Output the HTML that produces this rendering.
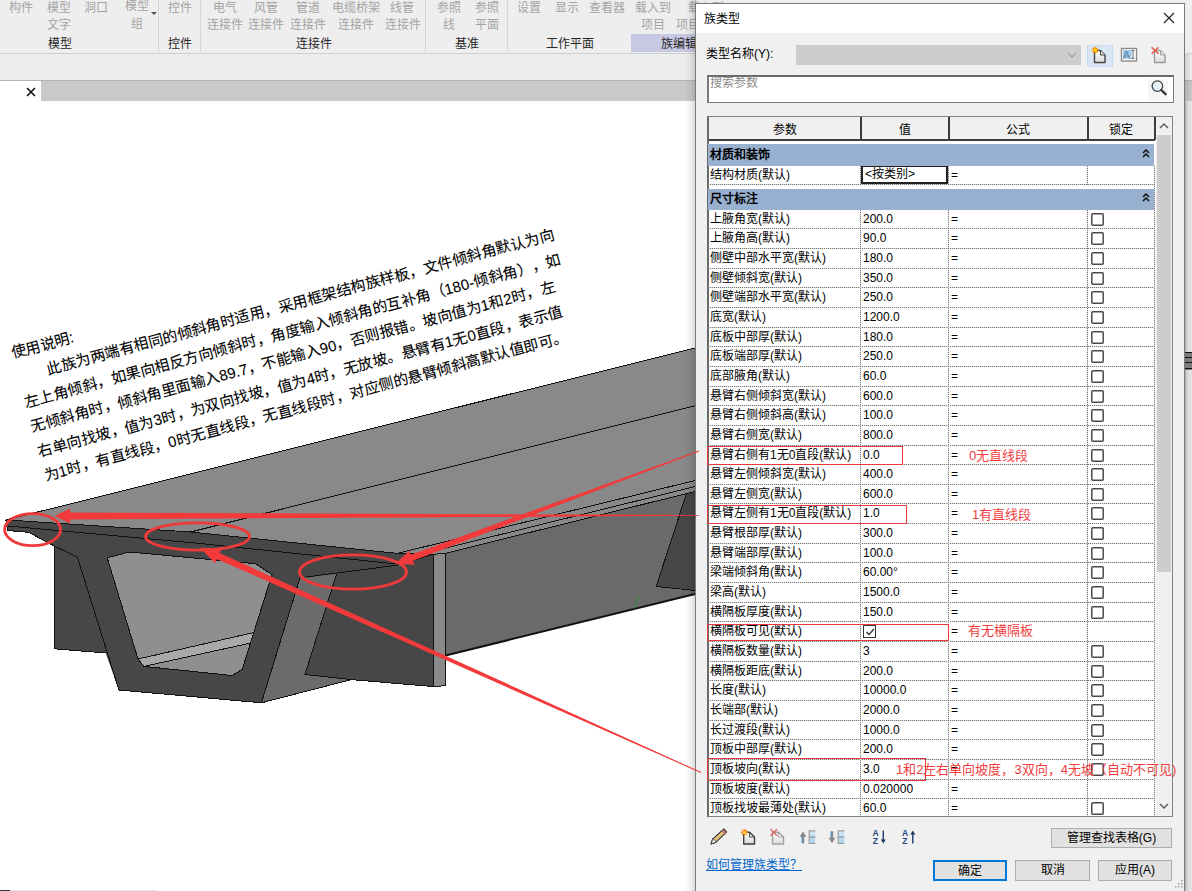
<!DOCTYPE html>
<html lang="zh-CN"><head><meta charset="utf-8">
<style>
*{box-sizing:border-box}
html,body{margin:0;padding:0}
body{width:1192px;height:891px;overflow:hidden;position:relative;background:#fff;font-family:"Liberation Sans",sans-serif;color:#000}
.a{position:absolute}
.rb{position:absolute;font-size:12px;color:#a4a4a4;white-space:nowrap;line-height:14px}
.rl{position:absolute;font-size:12px;color:#262626;white-space:nowrap;line-height:14px}
.sep{position:absolute;top:0;width:1px;height:52px;background:#d6d6d6}
.row{position:absolute;left:708px;width:446px;height:20px;font-size:12px;line-height:18px;white-space:nowrap}
.c1{position:absolute;left:2px;top:0}
.c2{position:absolute;left:155px;top:0}
.c3{position:absolute;left:243px;top:0}
.cb{position:absolute;left:383px;top:3px;width:13px;height:13px}
.dl{position:absolute;left:0;width:446px;height:1px;background-color:#dcdcdc;background-image:linear-gradient(to right,#7a7a7a 50%,transparent 50%);background-size:2px 1px}
.dv{position:absolute;width:1px;background-color:#dcdcdc;background-image:linear-gradient(to bottom,#7a7a7a 50%,transparent 50%);background-size:1px 2px}
.sec{position:absolute;left:708px;width:446px;background:#98b1d0;font-size:12px;font-weight:bold;line-height:20px}
.rt{position:absolute;color:#f23d3d;font-size:13px;white-space:nowrap;line-height:16px}
.rbx{position:absolute;border:1px solid #e8383c}
.btn{position:absolute;background:#e1e1e1;border:1px solid #adadad;font-size:12px;text-align:center;line-height:18px}
</style></head><body>

<div class="a" style="left:0;top:0;width:1192px;height:53px;background:#eeeeee"></div>
<div class="a" style="left:0;top:53px;width:1192px;height:1px;background:#cfcfcf"></div>
<div class="a" style="left:0;top:54px;width:1192px;height:26px;background:#ededed"></div>
<div class="rb" style="left:9px;top:1px">构件</div>
<div class="rb" style="left:47px;top:1px">模型</div>
<div class="rb" style="left:47px;top:18px">文字</div>
<div class="rb" style="left:84px;top:1px">洞口</div>
<div class="rb" style="left:125px;top:-1px">模型</div>
<div class="rb" style="left:131px;top:17px">组</div>
<div class="rb" style="left:168px;top:1px">控件</div>
<div class="rb" style="left:213px;top:1px">电气</div>
<div class="rb" style="left:207px;top:18px">连接件</div>
<div class="rb" style="left:254px;top:1px">风管</div>
<div class="rb" style="left:248px;top:18px">连接件</div>
<div class="rb" style="left:296px;top:1px">管道</div>
<div class="rb" style="left:290px;top:18px">连接件</div>
<div class="rb" style="left:332px;top:1px">电缆桥架</div>
<div class="rb" style="left:338px;top:18px">连接件</div>
<div class="rb" style="left:390px;top:1px">线管</div>
<div class="rb" style="left:385px;top:18px">连接件</div>
<div class="rb" style="left:437px;top:1px">参照</div>
<div class="rb" style="left:443px;top:18px">线</div>
<div class="rb" style="left:475px;top:1px">参照</div>
<div class="rb" style="left:475px;top:18px">平面</div>
<div class="rb" style="left:517px;top:1px">设置</div>
<div class="rb" style="left:555px;top:1px">显示</div>
<div class="rb" style="left:589px;top:1px">查看器</div>
<div class="rb" style="left:635px;top:1px">载入到</div>
<div class="rb" style="left:641px;top:18px">项目</div>
<div class="rb" style="left:688px;top:1px">载入到</div>
<div class="rb" style="left:676px;top:18px">项目</div>
<div class="sep" style="left:158px"></div>
<div class="sep" style="left:200px"></div>
<div class="sep" style="left:425px"></div>
<div class="sep" style="left:507px"></div>
<div class="a" style="left:631px;top:34px;width:70px;height:18px;background:#c6c8e4"></div>
<div class="rl" style="left:48px;top:37px">模型</div>
<div class="rl" style="left:168px;top:37px">控件</div>
<div class="rl" style="left:296px;top:37px">连接件</div>
<div class="rl" style="left:455px;top:37px">基准</div>
<div class="rl" style="left:546px;top:37px">工作平面</div>
<div class="rl" style="left:661px;top:37px">族编辑器</div>
<div class="a" style="left:151px;top:12px;width:0;height:0;border-left:3px solid transparent;border-right:3px solid transparent;border-top:3px solid #555"></div>
<div class="a" style="left:0;top:80px;width:1192px;height:1px;background:#b4b4b4"></div>
<div class="a" style="left:0;top:81px;width:1192px;height:20px;background:#c9c9c9"></div>
<div class="a" style="left:0;top:81px;width:41px;height:20px;background:#fff"></div>
<svg class="a" style="left:26px;top:87px" width="10" height="10"><path d="M1 1L9 9M9 1L1 9" stroke="#111" stroke-width="1.6"/></svg>
<svg class="a" style="left:0;top:0" width="1192" height="891" viewBox="0 0 1192 891">
<g stroke="none">
<polygon fill="#898989" points="5.9,519.9 695,348 695,491.5 445.5,553.3 433.5,554.3 397.4,553.4 190.6,532"/>
<polygon fill="#6a6a6a" points="445.5,553.3 695,491.5 695,593.4 445.5,655"/>
<polygon fill="#474747" points="686.5,493.5 695,491.5 695,590.5 656.2,586.5"/>
<polygon fill="#474747" points="5.9,519.9 190.6,532 397.4,553.4 433.5,554.3 433.5,686.6 351.4,679.6 261.4,702.8 118.9,690 105.7,653 54.3,648.8 54.3,546 28.6,532.3 7.6,530.6"/>
<polygon fill="#8f8f8f" points="107.2,557.8 129.2,552 255.4,563.7 272,574.5 242.2,669.4 232.1,675.5 143.9,666.4 138,659"/>
<polygon fill="#a9a9a9" points="138,659 253,632.7 251,643 143.9,666.4"/>
<polygon fill="#6b6b6b" points="299.8,578.5 336.8,573.5 304.9,674.5 351.4,679.6 261.4,702.8"/>
<polygon fill="#8a8a8a" points="433.5,554.3 445.5,553.3 445.5,685.6 433.5,686.6"/>
</g>
<g stroke="#111" stroke-width="1" fill="none" shape-rendering="crispEdges">
<polyline points="5.9,519.9 695,348"/>
<polyline points="190.6,532 695,405.7"/>
<polyline points="5.9,519.9 190.6,532 397.4,553.4 433.5,554.3 445.5,553.3"/>
<polyline points="397.4,553.4 695,480.5"/>
<polyline points="433.5,551 695,486.6"/>
<polyline points="445.5,553.3 695,491.5"/>
<polyline points="7.6,526 200,543.5 397,564"/>
<polyline points="5.9,519.9 7.6,530.6 28.6,532.3 54.3,546 77.4,557.2 118.9,690 261.4,702.8 351.4,679.6 433.5,686.6 445.5,685.6 445.5,553.3"/>
<polyline points="54.3,546 54.3,648.8 105.7,653"/>
<polyline points="107.2,557.8 129.2,552 255.4,563.7 272,574.5 242.2,669.4 232.1,675.5 143.9,666.4 138,659 107.2,557.8"/>
<polyline points="138,659 253,632.7"/>
<polyline points="143.9,666.4 251,643"/>
<polyline points="299.8,578.5 261.4,702.8"/>
<polyline points="306,577 395.8,565.4 433.5,554.3"/>
<polyline points="336.8,573.5 304.9,674.5 351.4,679.6"/>
<polyline points="433.5,554.3 433.5,686.6"/>
<polyline points="686.5,493.5 656.2,586.5 695,590.5"/>
</g>
<path d="M445.5 655.5L695 594" stroke="#111" stroke-width="2"/>
<path d="M634.5 608.5L638.5 595.5" stroke="#2e8b2e" stroke-width="1"/>
</svg>

<div class="a" style="left:8px;top:341px;transform-origin:0 0;transform:rotate(-15deg);font-size:15px;line-height:25.4px;color:#000;-webkit-text-stroke:0.08px #000;white-space:nowrap">
<div>使用说明:</div>
<div style="padding-left:30px">此族为两端有相同的倾斜角时适用，采用框架结构族样板，文件倾斜角默认为向</div>
<div>左上角倾斜，如果向相反方向倾斜时，角度输入倾斜角的互补角（180-倾斜角）<span style="margin-left:7px">，如</span></div>
<div>无倾斜角时，倾斜角里面输入89.7，不能输入90，否则报错。坡向值为1和2时，左</div>
<div>右单向找坡，值为3时，为双向找坡，值为4时，无放坡。悬臂有1无0直段，表示值</div>
<div>为1时，有直线段，0时无直线段，无直线段时，对应侧的悬臂倾斜高默认值即可。</div>
</div>

<div class="a" style="left:684px;top:0;width:12px;height:891px;background:linear-gradient(to right,rgba(0,0,0,0),rgba(0,0,0,0.05) 50%,rgba(0,0,0,0.16))"></div>
<div class="a" style="left:1185px;top:101px;width:7px;height:790px;background:linear-gradient(to right,#a8a8a8,#d8d8d8 30%,#e4e4e4)"></div>
<svg class="a" style="left:1185px;top:351px" width="7" height="20"><rect x="0" y="1" width="7" height="18" fill="#7a7a7a"/><path d="M0 1.5H7M0 6.5H7M0 11.5H7M0 17.5H7" stroke="#111" stroke-width="1"/></svg>
<div class="a" style="left:1185px;top:54px;width:7px;height:47px;background:linear-gradient(to right,rgba(0,0,0,0.12),rgba(0,0,0,0))"></div>
<div class="a" style="left:695px;top:3px;width:490px;height:900px;background:#f0f0f0;border:1px solid #7a7a7a"></div>
<div class="a" style="left:696px;top:4px;width:488px;height:29px;background:#fff"></div>
<div class="a" style="left:704px;top:12px;font-size:12px;line-height:14px;color:#000">族类型</div>
<svg class="a" style="left:1163px;top:12px" width="12" height="12"><path d="M1 1L11 11M11 1L1 11" stroke="#222" stroke-width="1.2"/></svg>
<div class="a" style="left:706px;top:47px;font-size:12px;line-height:14px">类型名称(Y):</div>
<div class="a" style="left:796px;top:45px;width:285px;height:20px;background:#cccccc"></div>
<svg class="a" style="left:1067px;top:51px" width="10" height="8"><path d="M1 2L5 6L9 2" stroke="#888" fill="none" stroke-width="1"/></svg>
<div class="a" style="left:1087px;top:45px;width:26px;height:22px;background:#d9e7f4;border:1px solid #c5ddf2"></div>
<svg class="a" style="left:1086px;top:44px" width="82" height="24" viewBox="1086 44 82 24">
<defs><linearGradient id="dg" x1="0" y1="0" x2="0" y2="1"><stop offset="0" stop-color="#ffffff"/><stop offset="1" stop-color="#dcdcdc"/></linearGradient></defs>
<path d="M1094.5 50.5H1100.5L1105 55V62.5H1094.5Z" fill="url(#dg)" stroke="#444" stroke-width="1.4" stroke-linejoin="round"/>
<path d="M1100.5 50.5V55H1105" fill="#ddd" stroke="#444" stroke-width="1"/>
<g stroke="#ff8c00" stroke-width="1.3"><path d="M1095.2 46.8V53.6M1091.8 50.2H1098.6M1092.8 47.8L1097.6 52.6M1097.6 47.8L1092.8 52.6"/></g>
<circle cx="1095.2" cy="50.2" r="1.6" fill="#ffd700"/>
<rect x="1121.5" y="48.5" width="15" height="12.5" fill="#fff" stroke="#8a8a8a" stroke-width="1.4"/>
<rect x="1123" y="50" width="8.5" height="9" fill="#9cc9ea"/>
<path d="M1123.5 58.5L1126.5 51L1129.5 58.5M1124.8 56H1128.2" stroke="#5a7fa0" fill="none" stroke-width="1"/>
<path d="M1131.5 50.5H1134.5M1133 50.5V58.5M1131.5 58.5H1134.5" stroke="#666" fill="none" stroke-width="1"/>
<path d="M1154.5 50.5H1160.5L1165 55V62.5H1154.5Z" fill="url(#dg)" stroke="#9a9a9a" stroke-width="1.4" stroke-linejoin="round"/>
<path d="M1160.5 50.5V55H1165" fill="#e5e5e5" stroke="#9a9a9a" stroke-width="1"/>
<path d="M1151.6 47.2L1158.6 53.8M1158.6 47.2L1151.6 53.8" stroke="#e2574c" stroke-width="1.5"/>
</svg>

<div class="a" style="left:707px;top:75px;width:467px;height:28px;background:#fff;border:1px solid #7a7a7a;border-top:2px solid #6a6a6a;border-left:2px solid #7a7a7a"></div>
<div class="a" style="left:710px;top:76px;font-size:12px;line-height:14px;color:#8a8a8a">搜索参数</div>
<div class="a" style="left:1148px;top:79px;width:20px;height:22px;background:#f6f6f6"></div>
<svg class="a" style="left:1150px;top:80px" width="18" height="18"><circle cx="7.4" cy="6.1" r="5.3" stroke="#3a3a3a" stroke-width="1.2" fill="#e4f0f7"/><path d="M11.2 10L15.6 14.2" stroke="#333" stroke-width="2.3" stroke-linecap="round"/></svg>
<div class="a" style="left:707px;top:116px;width:466px;height:701px;background:#fff;border:1px solid #828282;border-left:2px solid #6a6a6a"></div>
<div class="a" style="left:709px;top:117px;width:446px;height:23px;background:#f0f0f0"></div>
<div class="a" style="left:709px;top:139px;width:446px;height:2px;background:#3c3c3c"></div>
<div class="a" style="left:860px;top:117px;width:2px;height:23px;background:#3c3c3c"></div>
<div class="a" style="left:948px;top:117px;width:2px;height:23px;background:#3c3c3c"></div>
<div class="a" style="left:1087px;top:117px;width:2px;height:23px;background:#3c3c3c"></div>
<div class="a" style="left:1154px;top:117px;width:2px;height:23px;background:#3c3c3c"></div>
<div class="a" style="left:745px;top:123px;width:80px;text-align:center;font-size:12px;line-height:14px">参数</div>
<div class="a" style="left:865px;top:123px;width:80px;text-align:center;font-size:12px;line-height:14px">值</div>
<div class="a" style="left:978px;top:123px;width:80px;text-align:center;font-size:12px;line-height:14px">公式</div>
<div class="a" style="left:1081px;top:123px;width:80px;text-align:center;font-size:12px;line-height:14px">锁定</div>
<div class="a" style="left:1156px;top:117px;width:16px;height:699px;background:#f0f0f0"></div>
<div class="a" style="left:1157px;top:135px;width:14px;height:437px;background:#cdcdcd"></div>
<svg class="a" style="left:1158px;top:122px" width="12" height="8"><path d="M2 6L6 2L10 6" stroke="#606060" fill="none" stroke-width="1.5"/></svg>
<svg class="a" style="left:1158px;top:802px" width="12" height="8"><path d="M2 2L6 6L10 2" stroke="#606060" fill="none" stroke-width="1.5"/></svg>
<div class="sec" style="top:144px;height:22px"><span style="position:absolute;left:2px;top:1px">材质和装饰</span></div>
<svg class="a" style="left:1142px;top:149px" width="8" height="9"><path d="M1 4L4 1L7 4M1 8L4 5L7 8" stroke="#111" fill="none" stroke-width="1.5"/></svg>
<div class="row" style="top:166px"><span class="c1">结构材质(默认)</span><span class="c3">=</span></div>
<div class="a" style="left:861px;top:166px;width:87px;height:18px;border:2px solid #222;border-top:1px solid #222;background:#fff;font-size:12px;line-height:15px;padding-left:2px">&lt;按类别&gt;</div>
<div class="dl" style="left:708px;top:184px;width:446px"></div>
<div class="dv" style="left:948px;top:166px;height:19px"></div>
<div class="dv" style="left:1087px;top:166px;height:19px"></div>
<div class="dv" style="left:1154px;top:166px;height:19px"></div>
<div class="sec" style="top:189px;height:21px"><span style="position:absolute;left:2px;top:0px">尺寸标注</span></div>
<svg class="a" style="left:1142px;top:193px" width="8" height="9"><path d="M1 4L4 1L7 4M1 8L4 5L7 8" stroke="#111" fill="none" stroke-width="1.5"/></svg>
<div class="row" style="top:210px;height:19px"><span class="c1">上腋角宽(默认)</span><span class="c2">200.0</span><span class="c3">=</span><svg class="cb" width="13" height="13"><rect x="0.8" y="0.8" width="11.4" height="11.4" rx="1" fill="#fff" stroke="#4a4a4a" stroke-width="1.5"/></svg></div>
<div class="dl" style="left:708px;top:228px"></div>
<div class="row" style="top:229px;height:20px"><span class="c1">上腋角高(默认)</span><span class="c2">90.0</span><span class="c3">=</span><svg class="cb" width="13" height="13"><rect x="0.8" y="0.8" width="11.4" height="11.4" rx="1" fill="#fff" stroke="#4a4a4a" stroke-width="1.5"/></svg></div>
<div class="dl" style="left:708px;top:248px"></div>
<div class="row" style="top:249px;height:20px"><span class="c1">侧壁中部水平宽(默认)</span><span class="c2">180.0</span><span class="c3">=</span><svg class="cb" width="13" height="13"><rect x="0.8" y="0.8" width="11.4" height="11.4" rx="1" fill="#fff" stroke="#4a4a4a" stroke-width="1.5"/></svg></div>
<div class="dl" style="left:708px;top:268px"></div>
<div class="row" style="top:269px;height:19px"><span class="c1">侧壁倾斜宽(默认)</span><span class="c2">350.0</span><span class="c3">=</span><svg class="cb" width="13" height="13"><rect x="0.8" y="0.8" width="11.4" height="11.4" rx="1" fill="#fff" stroke="#4a4a4a" stroke-width="1.5"/></svg></div>
<div class="dl" style="left:708px;top:287px"></div>
<div class="row" style="top:288px;height:20px"><span class="c1">侧壁端部水平宽(默认)</span><span class="c2">250.0</span><span class="c3">=</span><svg class="cb" width="13" height="13"><rect x="0.8" y="0.8" width="11.4" height="11.4" rx="1" fill="#fff" stroke="#4a4a4a" stroke-width="1.5"/></svg></div>
<div class="dl" style="left:708px;top:307px"></div>
<div class="row" style="top:308px;height:20px"><span class="c1">底宽(默认)</span><span class="c2">1200.0</span><span class="c3">=</span><svg class="cb" width="13" height="13"><rect x="0.8" y="0.8" width="11.4" height="11.4" rx="1" fill="#fff" stroke="#4a4a4a" stroke-width="1.5"/></svg></div>
<div class="dl" style="left:708px;top:327px"></div>
<div class="row" style="top:328px;height:19px"><span class="c1">底板中部厚(默认)</span><span class="c2">180.0</span><span class="c3">=</span><svg class="cb" width="13" height="13"><rect x="0.8" y="0.8" width="11.4" height="11.4" rx="1" fill="#fff" stroke="#4a4a4a" stroke-width="1.5"/></svg></div>
<div class="dl" style="left:708px;top:346px"></div>
<div class="row" style="top:347px;height:20px"><span class="c1">底板端部厚(默认)</span><span class="c2">250.0</span><span class="c3">=</span><svg class="cb" width="13" height="13"><rect x="0.8" y="0.8" width="11.4" height="11.4" rx="1" fill="#fff" stroke="#4a4a4a" stroke-width="1.5"/></svg></div>
<div class="dl" style="left:708px;top:366px"></div>
<div class="row" style="top:367px;height:20px"><span class="c1">底部腋角(默认)</span><span class="c2">60.0</span><span class="c3">=</span><svg class="cb" width="13" height="13"><rect x="0.8" y="0.8" width="11.4" height="11.4" rx="1" fill="#fff" stroke="#4a4a4a" stroke-width="1.5"/></svg></div>
<div class="dl" style="left:708px;top:386px"></div>
<div class="row" style="top:387px;height:19px"><span class="c1">悬臂右侧倾斜宽(默认)</span><span class="c2">600.0</span><span class="c3">=</span><svg class="cb" width="13" height="13"><rect x="0.8" y="0.8" width="11.4" height="11.4" rx="1" fill="#fff" stroke="#4a4a4a" stroke-width="1.5"/></svg></div>
<div class="dl" style="left:708px;top:405px"></div>
<div class="row" style="top:406px;height:20px"><span class="c1">悬臂右侧倾斜高(默认)</span><span class="c2">100.0</span><span class="c3">=</span><svg class="cb" width="13" height="13"><rect x="0.8" y="0.8" width="11.4" height="11.4" rx="1" fill="#fff" stroke="#4a4a4a" stroke-width="1.5"/></svg></div>
<div class="dl" style="left:708px;top:425px"></div>
<div class="row" style="top:426px;height:20px"><span class="c1">悬臂右侧宽(默认)</span><span class="c2">800.0</span><span class="c3">=</span><svg class="cb" width="13" height="13"><rect x="0.8" y="0.8" width="11.4" height="11.4" rx="1" fill="#fff" stroke="#4a4a4a" stroke-width="1.5"/></svg></div>
<div class="dl" style="left:708px;top:445px"></div>
<div class="row" style="top:446px;height:19px"><span class="c1">悬臂右侧有1无0直段(默认)</span><span class="c2">0.0</span><span class="c3">=</span><svg class="cb" width="13" height="13"><rect x="0.8" y="0.8" width="11.4" height="11.4" rx="1" fill="#fff" stroke="#4a4a4a" stroke-width="1.5"/></svg></div>
<div class="dl" style="left:708px;top:464px"></div>
<div class="row" style="top:465px;height:20px"><span class="c1">悬臂左侧倾斜宽(默认)</span><span class="c2">400.0</span><span class="c3">=</span><svg class="cb" width="13" height="13"><rect x="0.8" y="0.8" width="11.4" height="11.4" rx="1" fill="#fff" stroke="#4a4a4a" stroke-width="1.5"/></svg></div>
<div class="dl" style="left:708px;top:484px"></div>
<div class="row" style="top:485px;height:19px"><span class="c1">悬臂左侧宽(默认)</span><span class="c2">600.0</span><span class="c3">=</span><svg class="cb" width="13" height="13"><rect x="0.8" y="0.8" width="11.4" height="11.4" rx="1" fill="#fff" stroke="#4a4a4a" stroke-width="1.5"/></svg></div>
<div class="dl" style="left:708px;top:503px"></div>
<div class="row" style="top:504px;height:20px"><span class="c1">悬臂左侧有1无0直段(默认)</span><span class="c2">1.0</span><span class="c3">=</span><svg class="cb" width="13" height="13"><rect x="0.8" y="0.8" width="11.4" height="11.4" rx="1" fill="#fff" stroke="#4a4a4a" stroke-width="1.5"/></svg></div>
<div class="dl" style="left:708px;top:523px"></div>
<div class="row" style="top:524px;height:20px"><span class="c1">悬臂根部厚(默认)</span><span class="c2">300.0</span><span class="c3">=</span><svg class="cb" width="13" height="13"><rect x="0.8" y="0.8" width="11.4" height="11.4" rx="1" fill="#fff" stroke="#4a4a4a" stroke-width="1.5"/></svg></div>
<div class="dl" style="left:708px;top:543px"></div>
<div class="row" style="top:544px;height:19px"><span class="c1">悬臂端部厚(默认)</span><span class="c2">100.0</span><span class="c3">=</span><svg class="cb" width="13" height="13"><rect x="0.8" y="0.8" width="11.4" height="11.4" rx="1" fill="#fff" stroke="#4a4a4a" stroke-width="1.5"/></svg></div>
<div class="dl" style="left:708px;top:562px"></div>
<div class="row" style="top:563px;height:20px"><span class="c1">梁端倾斜角(默认)</span><span class="c2">60.00°</span><span class="c3">=</span><svg class="cb" width="13" height="13"><rect x="0.8" y="0.8" width="11.4" height="11.4" rx="1" fill="#fff" stroke="#4a4a4a" stroke-width="1.5"/></svg></div>
<div class="dl" style="left:708px;top:582px"></div>
<div class="row" style="top:583px;height:20px"><span class="c1">梁高(默认)</span><span class="c2">1500.0</span><span class="c3">=</span><svg class="cb" width="13" height="13"><rect x="0.8" y="0.8" width="11.4" height="11.4" rx="1" fill="#fff" stroke="#4a4a4a" stroke-width="1.5"/></svg></div>
<div class="dl" style="left:708px;top:602px"></div>
<div class="row" style="top:603px;height:19px"><span class="c1">横隔板厚度(默认)</span><span class="c2">150.0</span><span class="c3">=</span><svg class="cb" width="13" height="13"><rect x="0.8" y="0.8" width="11.4" height="11.4" rx="1" fill="#fff" stroke="#4a4a4a" stroke-width="1.5"/></svg></div>
<div class="dl" style="left:708px;top:621px"></div>
<div class="row" style="top:622px;height:20px"><span class="c1">横隔板可见(默认)</span><span style="position:absolute;left:155px;top:3px;width:13px;height:13px;border:1px solid #333;background:#fff"><svg style="position:absolute;left:1px;top:1px" width="10" height="10"><path d="M1.5 5L4 7.5L9 2" stroke="#333" fill="none" stroke-width="1.3"/></svg></span><span class="c3">=</span></div>
<div class="dl" style="left:708px;top:641px"></div>
<div class="row" style="top:642px;height:20px"><span class="c1">横隔板数量(默认)</span><span class="c2">3</span><span class="c3">=</span><svg class="cb" width="13" height="13"><rect x="0.8" y="0.8" width="11.4" height="11.4" rx="1" fill="#fff" stroke="#4a4a4a" stroke-width="1.5"/></svg></div>
<div class="dl" style="left:708px;top:661px"></div>
<div class="row" style="top:662px;height:19px"><span class="c1">横隔板距底(默认)</span><span class="c2">200.0</span><span class="c3">=</span><svg class="cb" width="13" height="13"><rect x="0.8" y="0.8" width="11.4" height="11.4" rx="1" fill="#fff" stroke="#4a4a4a" stroke-width="1.5"/></svg></div>
<div class="dl" style="left:708px;top:680px"></div>
<div class="row" style="top:681px;height:20px"><span class="c1">长度(默认)</span><span class="c2">10000.0</span><span class="c3">=</span><svg class="cb" width="13" height="13"><rect x="0.8" y="0.8" width="11.4" height="11.4" rx="1" fill="#fff" stroke="#4a4a4a" stroke-width="1.5"/></svg></div>
<div class="dl" style="left:708px;top:700px"></div>
<div class="row" style="top:701px;height:20px"><span class="c1">长端部(默认)</span><span class="c2">2000.0</span><span class="c3">=</span><svg class="cb" width="13" height="13"><rect x="0.8" y="0.8" width="11.4" height="11.4" rx="1" fill="#fff" stroke="#4a4a4a" stroke-width="1.5"/></svg></div>
<div class="dl" style="left:708px;top:720px"></div>
<div class="row" style="top:721px;height:19px"><span class="c1">长过渡段(默认)</span><span class="c2">1000.0</span><span class="c3">=</span><svg class="cb" width="13" height="13"><rect x="0.8" y="0.8" width="11.4" height="11.4" rx="1" fill="#fff" stroke="#4a4a4a" stroke-width="1.5"/></svg></div>
<div class="dl" style="left:708px;top:739px"></div>
<div class="row" style="top:740px;height:20px"><span class="c1">顶板中部厚(默认)</span><span class="c2">200.0</span><span class="c3">=</span><svg class="cb" width="13" height="13"><rect x="0.8" y="0.8" width="11.4" height="11.4" rx="1" fill="#fff" stroke="#4a4a4a" stroke-width="1.5"/></svg></div>
<div class="dl" style="left:708px;top:759px"></div>
<div class="row" style="top:760px;height:20px"><span class="c1">顶板坡向(默认)</span><span class="c2">3.0</span><span class="c3">=</span><svg class="cb" width="13" height="13"><rect x="0.8" y="0.8" width="11.4" height="11.4" rx="1" fill="#fff" stroke="#4a4a4a" stroke-width="1.5"/></svg></div>
<div class="dl" style="left:708px;top:779px"></div>
<div class="row" style="top:780px;height:19px"><span class="c1">顶板坡度(默认)</span><span class="c2">0.020000</span><span class="c3">=</span></div>
<div class="dl" style="left:708px;top:798px"></div>
<div class="row" style="top:799px;height:20px"><span class="c1">顶板找坡最薄处(默认)</span><span class="c2">60.0</span><span class="c3">=</span><svg class="cb" width="13" height="13"><rect x="0.8" y="0.8" width="11.4" height="11.4" rx="1" fill="#fff" stroke="#4a4a4a" stroke-width="1.5"/></svg></div>
<div class="dv" style="left:860px;top:210px;height:606px"></div>
<div class="dv" style="left:948px;top:210px;height:606px"></div>
<div class="dv" style="left:1087px;top:210px;height:606px"></div>
<div class="dv" style="left:1154px;top:166px;height:650px"></div>
<div class="dv" style="left:860px;top:166px;height:19px"></div>
<div class="rbx" style="left:707px;top:446px;width:196px;height:19px"></div>
<div class="rbx" style="left:707px;top:505px;width:200px;height:19px"></div>
<div class="rbx" style="left:707px;top:624px;width:242px;height:17px"></div>
<div class="rbx" style="left:707px;top:758px;width:219px;height:23px"></div>
<div class="rt" style="left:969px;top:448px">0无直线段</div>
<div class="rt" style="left:972px;top:507px">1有直线段</div>
<div class="rt" style="left:968px;top:623px">有无横隔板</div>
<div class="rt" style="left:896px;top:762px">1和2左右单向坡度，3双向，4无坡（自动不可见)</div>
<svg class="a" style="left:700px;top:824px" width="230" height="26" viewBox="700 824 230 26">
<defs><linearGradient id="dg2" x1="0" y1="0" x2="0" y2="1"><stop offset="0" stop-color="#ffffff"/><stop offset="1" stop-color="#dcdcdc"/></linearGradient>
<linearGradient id="eb" x1="0" y1="0" x2="0" y2="1"><stop offset="0" stop-color="#cfe6f7"/><stop offset="1" stop-color="#a9d2f0"/></linearGradient></defs>
<path d="M711 844L712.6 839.2L723.8 829L726.6 831.8L715.8 842.4Z" fill="#e6c27a" stroke="#333" stroke-width="1.1" stroke-linejoin="round"/>
<path d="M722 830L726 834" stroke="#b07070" stroke-width="2"/>
<path d="M711 844L713 838.5L716.5 842Z" fill="#f2f2f2" stroke="#333" stroke-width="0.8"/>
<path d="M743.7 832.2H749.5L754.5 837V844H743.7Z" fill="url(#dg2)" stroke="#3d3d3d" stroke-width="1.4" stroke-linejoin="round"/>
<path d="M749.5 832.2V837H754.5" fill="none" stroke="#3d3d3d" stroke-width="0.9"/>
<g stroke="#ff7a00" stroke-width="1.2"><path d="M744.4 829V835.8M741 832.4H747.8M742 830L746.8 834.8M746.8 830L742 834.8"/></g>
<circle cx="744.4" cy="832.4" r="1.5" fill="#ffe04a"/>
<path d="M772.5 832.2H778.3L783.5 837V844H772.5Z" fill="url(#dg2)" stroke="#a0a0a0" stroke-width="1.4" stroke-linejoin="round"/>
<path d="M778.3 832.2V837H783.5" fill="none" stroke="#a0a0a0" stroke-width="0.9"/>
<path d="M770.5 829.3L777 835.8M777 829.3L770.5 835.8" stroke="#e06a62" stroke-width="1.4"/>
<path d="M803 843.3V836" stroke="#8a8a8a" stroke-width="2.4"/><path d="M799.6 836.8L803 831.3L806.4 836.8Z" fill="#8a8a8a"/>
<path d="M802.2 836V843" stroke="#4a90c8" stroke-width="1"/>
<rect x="810" y="831.5" width="5" height="11.5" fill="url(#eb)"/><path d="M815.5 830.8H809.2V843.5H815.5M809.2 837.2H815.5" fill="none" stroke="#9a9a9a" stroke-width="1.2"/>
<path d="M832 831.3V838.5" stroke="#8a8a8a" stroke-width="2.4"/><path d="M828.6 837.8L832 843.3L835.4 837.8Z" fill="#8a8a8a"/>
<path d="M831.2 831.5V838" stroke="#4a90c8" stroke-width="1"/>
<rect x="839" y="831.5" width="5" height="11.5" fill="url(#eb)"/><path d="M844.5 830.8H838.2V843.5H844.5M838.2 837.2H844.5" fill="none" stroke="#9a9a9a" stroke-width="1.2"/>
<g font-family="Liberation Sans" font-weight="bold" font-size="8.5" fill="#244a7a">
<text x="872.6" y="835.5">A</text><text x="872.8" y="844">Z</text>
<text x="902" y="835.5">A</text><text x="902.2" y="844">Z</text>
</g>
<path d="M883.3 830.5V841" stroke="#1f3a66" stroke-width="1.4"/><path d="M880.8 839.5L883.3 843.5L885.8 839.5Z" fill="#1f3a66"/>
<path d="M912.8 833.5V843.5" stroke="#1f3a66" stroke-width="1.4"/><path d="M910.3 834.5L912.8 830.5L915.3 834.5Z" fill="#1f3a66"/>
</svg>

<div class="btn" style="left:1051px;top:828px;width:121px;height:20px">管理查找表格(G)</div>
<div class="a" style="left:706px;top:858px;font-size:12px;line-height:14px;color:#0066cc;text-decoration:underline">如何管理族类型？</div>
<div class="btn" style="left:933px;top:860px;width:74px;height:21px;border:2px solid #0078d7">确定</div>
<div class="btn" style="left:1015px;top:860px;width:75px;height:21px">取消</div>
<div class="btn" style="left:1098px;top:860px;width:74px;height:21px">应用(A)</div>
<svg class="a" style="left:1174px;top:878px" width="10" height="12"><g fill="#a0a0a0"><rect x="7" y="2" width="1.5" height="1.5"/><rect x="4" y="5" width="1.5" height="1.5"/><rect x="7" y="5" width="1.5" height="1.5"/><rect x="1" y="8" width="1.5" height="1.5"/><rect x="4" y="8" width="1.5" height="1.5"/><rect x="7" y="8" width="1.5" height="1.5"/></g></svg>
<div class="a" style="left:0;top:890px;width:10px;height:1px;background:#333"></div><div class="a" style="left:10px;top:890px;width:147px;height:1px;background:#e0e0e0"></div>
<svg class="a" style="left:0;top:0" width="1192" height="891" viewBox="0 0 1192 891">
<g fill="none" stroke="#f03a3a" stroke-width="2.8">
<ellipse cx="32.6" cy="529.6" rx="28" ry="16"/>
<ellipse cx="197.5" cy="536.5" rx="52" ry="13.6"/>
<ellipse cx="353" cy="572" rx="53.5" ry="17.2"/>
</g>
<polygon fill="#f23a3a" points="699.0,515.0 70.2,512.4 70.2,508.4 54.7,515.9 70.2,523.4 70.2,519.4 699.0,515.8"/>
<polygon fill="#f23a3a" points="698.9,450.6 410.7,554.7 409.3,550.7 395.0,564.0 414.5,564.8 413.0,560.8 699.1,451.4"/>
<polygon fill="#f23a3a" points="701.2,772.1 219.6,553.0 221.5,548.7 200.0,547.8 215.0,563.3 216.9,558.9 700.8,772.9"/>
</svg>
</body></html>
